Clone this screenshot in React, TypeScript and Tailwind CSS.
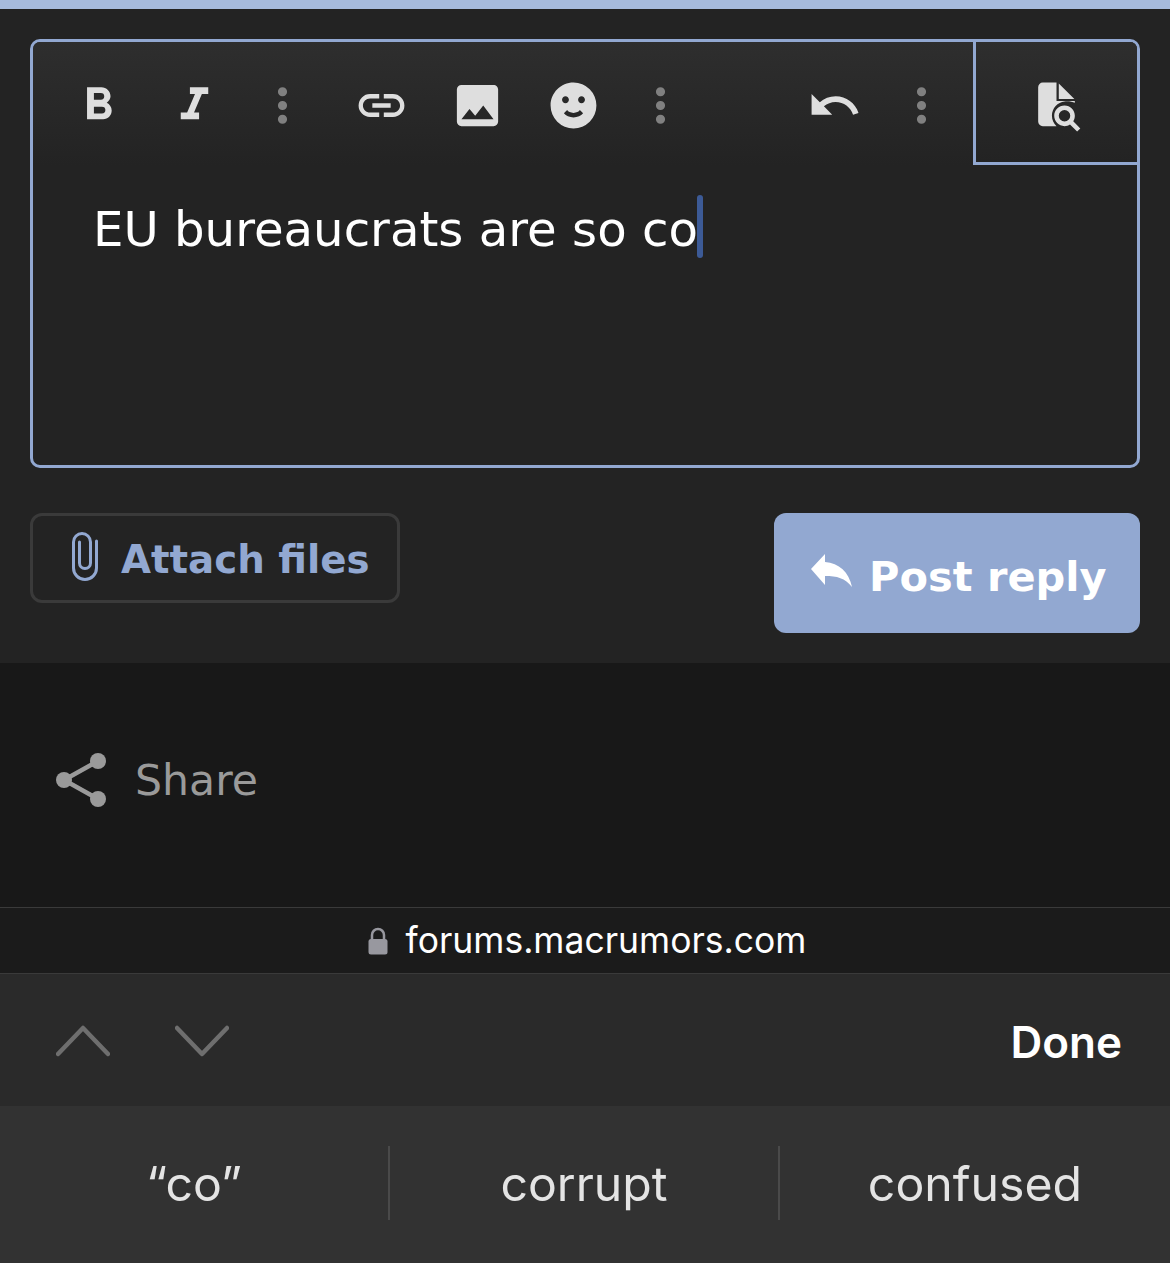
const DEJAVU = "font-['DejaVu_Sans',sans-serif]"
const IOS = "font-['Inter',sans-serif]"

const ICONS = {
  bold: 'M13.5,15.5H10V12.5H13.5A1.5,1.5 0 0,1 15,14A1.5,1.5 0 0,1 13.5,15.5M10,6.5H13A1.5,1.5 0 0,1 14.5,8A1.5,1.5 0 0,1 13,9.5H10M15.6,10.79C16.57,10.11 17.25,9 17.25,8C17.25,5.74 15.5,4 13.25,4H7V18H14.04C16.14,18 17.75,16.3 17.75,14.21C17.75,12.69 16.89,11.39 15.6,10.79Z',
  italic: 'M10,4V7H12.21L8.79,15H6V18H14V15H11.79L15.21,7H18V4H10Z',
  dots: 'M12,16A2,2 0 0,1 14,18A2,2 0 0,1 12,20A2,2 0 0,1 10,18A2,2 0 0,1 12,16M12,10A2,2 0 0,1 14,12A2,2 0 0,1 12,14A2,2 0 0,1 10,12A2,2 0 0,1 12,10M12,4A2,2 0 0,1 14,6A2,2 0 0,1 12,8A2,2 0 0,1 10,6A2,2 0 0,1 12,4Z',
  link: 'M3.9,12C3.9,10.29 5.29,8.9 7,8.9H11V7H7A5,5 0 0,0 2,12A5,5 0 0,0 7,17H11V15.1H7C5.29,15.1 3.9,13.71 3.9,12M8,13H16V11H8V13M17,7H13V8.9H17C18.71,8.9 20.1,10.29 20.1,12C20.1,13.71 18.71,15.1 17,15.1H13V17H17A5,5 0 0,0 22,12A5,5 0 0,0 17,7Z',
  image: 'M8.5,13.5L11,16.5L14.5,12L19,18H5M21,19V5C21,3.89 20.1,3 19,3H5A2,2 0 0,0 3,5V19A2,2 0 0,0 5,21H19A2,2 0 0,0 21,19Z',
  smile: 'M12,2C6.47,2 2,6.5 2,12A10,10 0 0,0 12,22A10,10 0 0,0 22,12A10,10 0 0,0 12,2M7,9.5C7,8.7 7.7,8 8.5,8C9.3,8 10,8.7 10,9.5C10,10.3 9.3,11 8.5,11C7.7,11 7,10.3 7,9.5M12,17.23C10.25,17.23 8.71,16.5 7.81,15.42L9.23,14C9.68,14.72 10.75,15.23 12,15.23C13.25,15.23 14.32,14.72 14.77,14L16.19,15.42C15.29,16.5 13.75,17.23 12,17.23M15.5,11C14.7,11 14,10.3 14,9.5C14,8.7 14.7,8 15.5,8C16.3,8 17,8.7 17,9.5C17,10.3 16.3,11 15.5,11Z',
  undo: 'M12.5,8C9.85,8 7.45,9 5.6,10.6L2,7V16H11L7.38,12.38C8.77,11.22 10.54,10.5 12.5,10.5C16.04,10.5 19.05,12.81 20.1,16L22.47,15.22C21.08,11.03 17.15,8 12.5,8Z',
  preview: 'M15.5,12C18,12 20,14 20,16.5C20,17.38 19.75,18.21 19.31,18.9L22.39,22L21,23.39L17.88,20.32C17.19,20.75 16.37,21 15.5,21C13,21 11,19 11,16.5C11,14 13,12 15.5,12M15.5,14A2.5,2.5 0 0,0 13,16.5A2.5,2.5 0 0,0 15.5,19A2.5,2.5 0 0,0 18,16.5A2.5,2.5 0 0,0 15.5,14M6,2H12V10H20V10.8C18.9,10.3 17,10 15.5,10.2C12.5,10.5 10,13 10,16.5C10,18.3 10.8,20 12,21H6A2,2 0 0,1 4,19V4A2,2 0 0,1 6,2M13,2.4L19.8,9.2H13V2.4Z',
}

function ToolIcon({ d, className = '' }: { d: string; className?: string }) {
  return (
    <svg viewBox="0 0 24 24" className={`w-[55px] h-[55px] shrink-0 ${className}`}>
      <path d={d} fill="currentColor" />
    </svg>
  )
}

export default function App() {
  return (
    <div className="w-[1170px] h-[1263px] overflow-hidden flex flex-col bg-[#181818]">
      <div className="h-[9px] bg-[#a6bbdd]" />

      {/* Reply panel */}
      <div className="h-[654px] bg-[#232323] px-[30px] pt-[30px]">
        <div className="h-[429px] border-[3px] border-[#92a8d1] rounded-[10px] overflow-hidden">
          {/* Toolbar */}
          <div className="h-[123px] flex items-start bg-gradient-to-b from-[#2e2e2e] to-[#232323] text-[#dedede]">
            <div className="flex items-center pt-[36px]">
              <ToolIcon d={ICONS.bold} className="ml-[38px]" />
              <ToolIcon d={ICONS.italic} className="ml-[41px]" />
              <ToolIcon d={ICONS.dots} className="ml-[32.5px] text-[#808080]" />
              <ToolIcon d={ICONS.link} className="ml-[44.5px]" />
              <ToolIcon d={ICONS.image} className="ml-[41px]" />
              <ToolIcon d={ICONS.smile} className="ml-[41px]" />
              <ToolIcon d={ICONS.dots} className="ml-[31.5px] text-[#808080]" />
              <ToolIcon d={ICONS.undo} className="ml-[119px]" />
              <ToolIcon d={ICONS.dots} className="ml-[32.5px] text-[#808080]" />
            </div>
            <div className="ml-auto w-[164px] h-[123px] border-l-[3px] border-b-[3px] border-[#92a8d1] bg-gradient-to-b from-[#2e2e2e] to-[#232323] flex items-center justify-center pt-[7px]">
              <ToolIcon d={ICONS.preview} />
            </div>
          </div>

          {/* Text area */}
          <div className={`pl-[60px] pt-[30px] flex items-start text-white text-[48.2px] leading-[63px] ${DEJAVU}`}>
            <span className="pt-[3px]">EU bureaucrats are so co</span>
            <span className="w-[6px] h-[63px] rounded-full bg-[#3c5a96] -ml-[1px]" />
          </div>
        </div>

        {/* Actions */}
        <div className={`mt-[45px] flex items-start justify-between ${DEJAVU}`}>
          <button className="w-[370px] h-[90px] border-[3px] border-[#3a3a3a] rounded-[12px] flex items-center pl-[39px] gap-[23px] text-[#92a8d1] font-bold text-[38.75px]">
            <svg viewBox="0 0 26 50" className="w-[26px] h-[50px] -mt-[4px]" fill="none" stroke="currentColor" strokeWidth="3" strokeLinecap="round">
              <path d="M24.5 10V37a11.5 11.5 0 0 1-23 0V11a8.5 8.5 0 0 1 17 0V32a5.5 5.5 0 0 1-11 0V11" />
            </svg>
            <span className="pt-[5px]">Attach files</span>
          </button>
          <button className="w-[366px] h-[120px] rounded-[12px] bg-[#92a8d1] flex items-center pl-[37px] gap-[17px] text-white font-bold text-[41.5px]">
            <svg viewBox="0 0 41 33" className="w-[41px] h-[33px] -mt-[5px]" fill="currentColor">
              <path d="M0 15L14 0V8C28 9 38 18 41 33C34 24 26 22 14 22V31Z" />
            </svg>
            <span className="pt-[9px]">Post reply</span>
          </button>
        </div>
      </div>

      {/* Share */}
      <div className={`h-[244px] bg-[#181818] flex items-center pl-[56px] gap-[29px] pb-[10px] text-[#9a9a9a] text-[42.6px] ${DEJAVU}`}>
        <svg viewBox="0 0 50 55" className="w-[50px] h-[55px]" fill="currentColor">
          <path d="M42 8L8 27L42 46" fill="none" stroke="currentColor" strokeWidth="4.5" />
          <circle cx="42" cy="8" r="8" />
          <circle cx="8" cy="27" r="8" />
          <circle cx="42" cy="46" r="8" />
        </svg>
        <span className="pt-[2px]">Share</span>
      </div>

      {/* Safari address bar */}
      <div className={`h-[67px] border-y border-[#3a3a3a] bg-[#1b1b1b] flex items-center justify-center gap-[18px] pl-[4px] text-white text-[35.5px] ${IOS}`}>
        <svg viewBox="0 0 20 28" className="w-[20px] h-[28px]">
          <path d="M4 13V8a6 6 0 0 1 12 0v5" fill="none" stroke="#98989f" strokeWidth="2.5" />
          <rect x="0.5" y="12" width="19" height="15.5" rx="2.5" fill="#98989f" />
        </svg>
        <span>forums.macrumors.com</span>
      </div>

      {/* Form accessory */}
      <div className={`h-[132px] bg-[#2a2a2a] flex items-center pl-[56px] pr-[48px] ${IOS}`}>
        <svg viewBox="0 0 54 32" className="w-[54px] h-[32px] mt-[2px]" fill="none" stroke="#6e6e6e" strokeWidth="4.5" strokeLinecap="round" strokeLinejoin="round">
          <path d="M2 29L27 3L52 29" />
        </svg>
        <svg viewBox="0 0 54 32" className="w-[54px] h-[32px] ml-[65px] mt-[2px]" fill="none" stroke="#6e6e6e" strokeWidth="4.5" strokeLinecap="round" strokeLinejoin="round">
          <path d="M2 3L27 29L52 3" />
        </svg>
        <span className="ml-auto text-white font-semibold text-[44px] pt-[4px]">Done</span>
      </div>

      {/* Suggestions */}
      <div className={`h-[157px] pb-[4px] bg-[#323232] flex items-center text-[#e4e4e4] text-[48.2px] ${IOS}`}>
        <div className="w-[388px] text-center pt-[4px]">“co”</div>
        <div className="w-[2px] h-[74px] bg-[#4a4a4a]" />
        <div className="w-[388px] text-center pt-[4px]">corrupt</div>
        <div className="w-[2px] h-[74px] bg-[#4a4a4a]" />
        <div className="flex-1 text-center pt-[4px]">confused</div>
      </div>
    </div>
  )
}
